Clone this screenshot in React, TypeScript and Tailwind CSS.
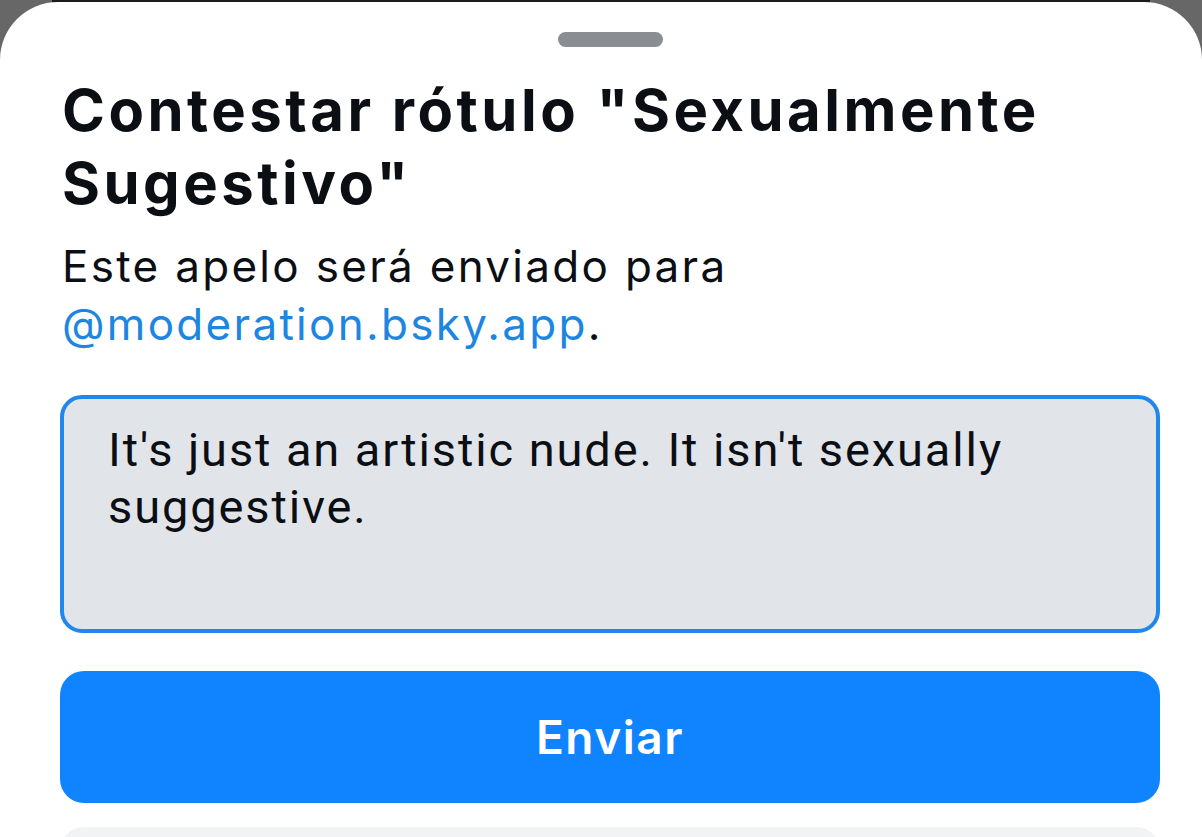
import React from "react";

export default function App() {
  return (
    <div className="w-[1202px] h-[837px] overflow-hidden bg-[#676767] relative">
      <div className="absolute left-[52px] right-[52px] top-0 h-[3px] bg-[#1c1c1c]" />
      <div className="mt-[2px] h-[835px] bg-white rounded-t-[58px] relative flex flex-col pl-[60px] pr-[42px]">
        <div className="flex justify-center pt-[30px] shrink-0">
          <div className="w-[105px] h-[15px] rounded-full bg-[#8a8d92]" />
        </div>
        <h1
          className="mt-[27px] pl-[2px] text-[58px] leading-[73px] font-bold text-[#0b0f14] tracking-[3.5px] shrink-0"
          style={{ fontFamily: "Inter, 'Noto Sans', sans-serif" }}
        >
          Contestar rótulo "Sexualmente Sugestivo"
        </h1>
        <p
          className="mt-[17px] pl-[2px] text-[44px] leading-[58px] text-[#0b0f14] tracking-[2.3px] shrink-0"
          style={{ fontFamily: "Inter, 'Noto Sans', sans-serif" }}
        >
          Este apelo será enviado para{" "}
          <span className="text-[#1c86e0]">@moderation.bsky.app</span>.
        </p>
        <div
          className="mt-[42px] h-[238px] shrink-0 rounded-[22px] border-[4px] border-[#1f88ea] bg-[#e1e5ea] pl-[44px] pr-[30px] pt-[22px] text-[47px] leading-[57px] text-[#0b0f14] tracking-[1.9px]"
          style={{ fontFamily: "Roboto, 'Noto Sans', sans-serif" }}
        >
          It's just an artistic nude. It isn't sexually suggestive.
        </div>
        <button
          className="mt-[38px] h-[132px] shrink-0 w-full rounded-[24px] bg-[#1083fe] text-white text-[46px] tracking-[1.5px] font-semibold flex items-center justify-center"
          style={{ fontFamily: "Inter, 'Noto Sans', sans-serif" }}
        >
          Enviar
        </button>
        <div className="mt-[24px] h-[132px] shrink-0 w-full rounded-[24px] bg-[#f1f3f5]" />
      </div>
    </div>
  );
}
